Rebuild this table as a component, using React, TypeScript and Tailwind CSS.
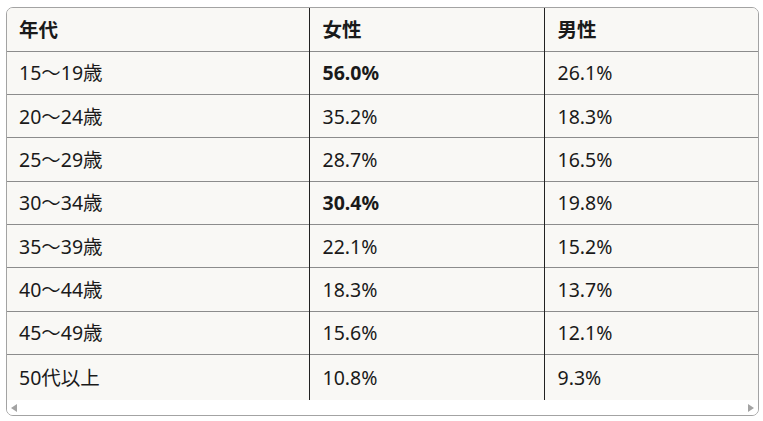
const rows = [
  { age: '15〜19歳', female: '56.0%', male: '26.1%', bold: true },
  { age: '20〜24歳', female: '35.2%', male: '18.3%' },
  { age: '25〜29歳', female: '28.7%', male: '16.5%' },
  { age: '30〜34歳', female: '30.4%', male: '19.8%', bold: true },
  { age: '35〜39歳', female: '22.1%', male: '15.2%' },
  { age: '40〜44歳', female: '18.3%', male: '13.7%' },
  { age: '45〜49歳', female: '15.6%', male: '12.1%' },
  { age: '50代以上', female: '10.8%', male: '9.3%' },
]

const App = () => {
  return (
    <div
      className="w-[763px] h-[421px] bg-white pt-[7px] pl-[6px] text-[#1a1a1a]"
      style={{ fontFamily: '"Noto Sans", "Noto Sans CJK JP", sans-serif' }}
    >
      <div className="w-[753px] h-[409px] border border-[#a3a3a3] rounded-[7px] overflow-hidden flex flex-col">
        <table className="w-full border-collapse bg-[#f9f8f5] text-[19.5px] leading-none table-fixed">
          <colgroup>
            <col className="w-[302px]" />
            <col className="w-[235px]" />
            <col />
          </colgroup>
          <thead>
            <tr className="h-[43.33px] border-b border-[#8c8c8c]">
              <th className="text-left font-bold pl-[12px] border-r border-[#222]">年代</th>
              <th className="text-left font-bold pl-[13px] border-r border-[#222]">女性</th>
              <th className="text-left font-bold pl-[13px]">男性</th>
            </tr>
          </thead>
          <tbody>
            {rows.map((r, i) => (
              <tr
                key={r.age}
                className={
                  i < rows.length - 1
                    ? 'h-[43.33px] border-b border-[#8c8c8c]'
                    : 'h-[45.7px]'
                }
              >
                <td className="pl-[12px] border-r border-[#222]">{r.age}</td>
                <td className={`pl-[13px] border-r border-[#222] ${r.bold ? 'font-bold' : ''}`}>
                  {r.female}
                </td>
                <td className="pl-[13px]">{r.male}</td>
              </tr>
            ))}
          </tbody>
        </table>
        <div className="flex-1 bg-white flex items-center justify-between px-[4px]">
          <svg width="6" height="8" viewBox="0 0 6 8">
            <path d="M6 0 L0 4 L6 8 Z" fill="#a3a3a3" />
          </svg>
          <svg width="6" height="8" viewBox="0 0 6 8">
            <path d="M0 0 L6 4 L0 8 Z" fill="#a3a3a3" />
          </svg>
        </div>
      </div>
    </div>
  )
}

export default App
